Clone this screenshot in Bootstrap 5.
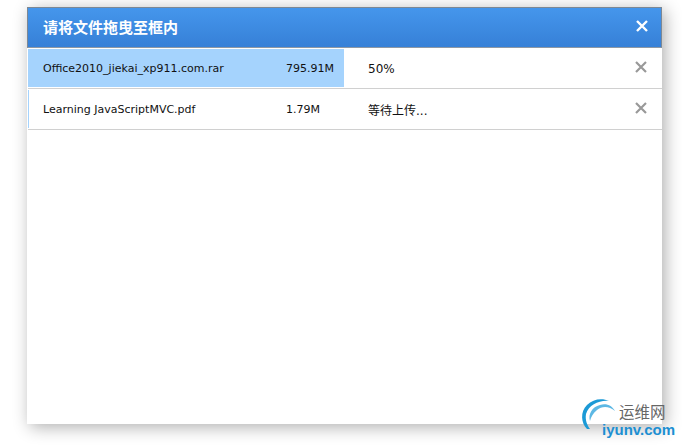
<!DOCTYPE html>
<html lang="zh-CN">
<head>
  <meta charset="UTF-8" />
  <meta name="viewport" content="width=device-width, initial-scale=1.0"/>
  <title>上传文件</title>
  <link href="https://cdn.jsdelivr.net/npm/bootstrap@5.3.2/dist/css/bootstrap.min.css" rel="stylesheet">
  <style>
    body { background: #fff; overflow: hidden; height: 445px; }
    .page-wrap { padding: 7px 0 0 27px; }
    .upload-dialog {
      width: 635px; height: 417px; background: #fff;
      box-shadow: 3px 3px 16px rgba(0, 0, 0, .32);
      font: 12px "DejaVu Sans", "Noto Sans CJK SC", sans-serif; color: #111;
    }
    .dialog-head {
      height: 41px; padding: 0 13px 3px 15px; color: #fff;
      background: linear-gradient(#4596ec, #3680d7);
      border: 1px solid #7d8894; border-bottom-color: #8d98a4;
    }
    .dialog-title { font: 700 15px "Noto Sans CJK SC", sans-serif; }
    .file-list { padding-left: 1px; }
    .file-row { height: 41px; border-bottom: 1px solid #d0d0d0; position: relative; padding: 1px 15px 0 0; }
    .row-bar { position: absolute; left: 0; top: 1px; bottom: 1px; background: #a5d3fd; }
    .file-name, .file-size, .file-state { position: relative; font-size: 11px; }
    .file-name { width: 258px; padding-left: 15px; }
    .file-size { width: 82px; }
    .file-state { flex: 1; font-size: 12px; }
    .x-icon { position: relative; display: block; margin-top: -3px; }
    .watermark { position: absolute; left: 578px; top: 397px; width: 104px; height: 46px; }
    .wm-cn { position: absolute; left: 41px; top: 6px; font: 15.5px "Noto Sans CJK SC", sans-serif; color: #666; line-height: 16px; }
    .wm-en { position: absolute; left: 24px; top: 24px; font: 700 15px "Liberation Sans", sans-serif; color: #1c8fd2; line-height: 18px; }
  </style>
</head>
<body>
  <div class="page-wrap">
    <div class="upload-dialog">
      <div class="dialog-head d-flex align-items-center justify-content-between">
        <span class="dialog-title">请将文件拖曳至框内</span>
        <svg width="12" height="12" viewBox="0 0 12 12"><path d="M1 1 11 11M11 1 1 11" stroke="#fff" stroke-width="2.4"/></svg>
      </div>
      <div class="file-list">
        <div class="file-row d-flex align-items-center">
          <div class="row-bar" style="width: 316px"></div>
          <div class="file-name">Office2010_jiekai_xp911.com.rar</div>
          <div class="file-size">795.91M</div>
          <div class="file-state">50%</div>
          <svg class="x-icon" width="12" height="12" viewBox="0 0 12 12"><path d="M1 1 11 11M11 1 1 11" stroke="#999" stroke-width="2.2"/></svg>
        </div>
        <div class="file-row d-flex align-items-center">
          <div class="row-bar" style="width: 1px"></div>
          <div class="file-name">Learning JavaScriptMVC.pdf</div>
          <div class="file-size">1.79M</div>
          <div class="file-state">等待上传...</div>
          <svg class="x-icon" width="12" height="12" viewBox="0 0 12 12"><path d="M1 1 11 11M11 1 1 11" stroke="#999" stroke-width="2.2"/></svg>
        </div>
      </div>
    </div>
  </div>
  <div class="watermark">
    <svg width="42" height="42" viewBox="0 0 42 42" class="position-absolute top-0 start-0">
      <path d="M9 32C3 26 2 15 9 8 15 2 24 1 31 4 21 3 11 8 8 17 7 23 9 28 12 32Z" fill="#1c9ad6"/>
      <path d="M12 24C10 17 14 10 22 8 29 6 34 9 37 14 31 9 24 9 19 13 15 16 13 20 12 24Z" fill="#5db8e4"/>
    </svg>
    <span class="wm-cn">运维网</span>
    <span class="wm-en">iyunv.com</span>
  </div>
  <script src="https://cdn.jsdelivr.net/npm/bootstrap@5.3.2/dist/js/bootstrap.bundle.min.js"></script>
</body>
</html>
